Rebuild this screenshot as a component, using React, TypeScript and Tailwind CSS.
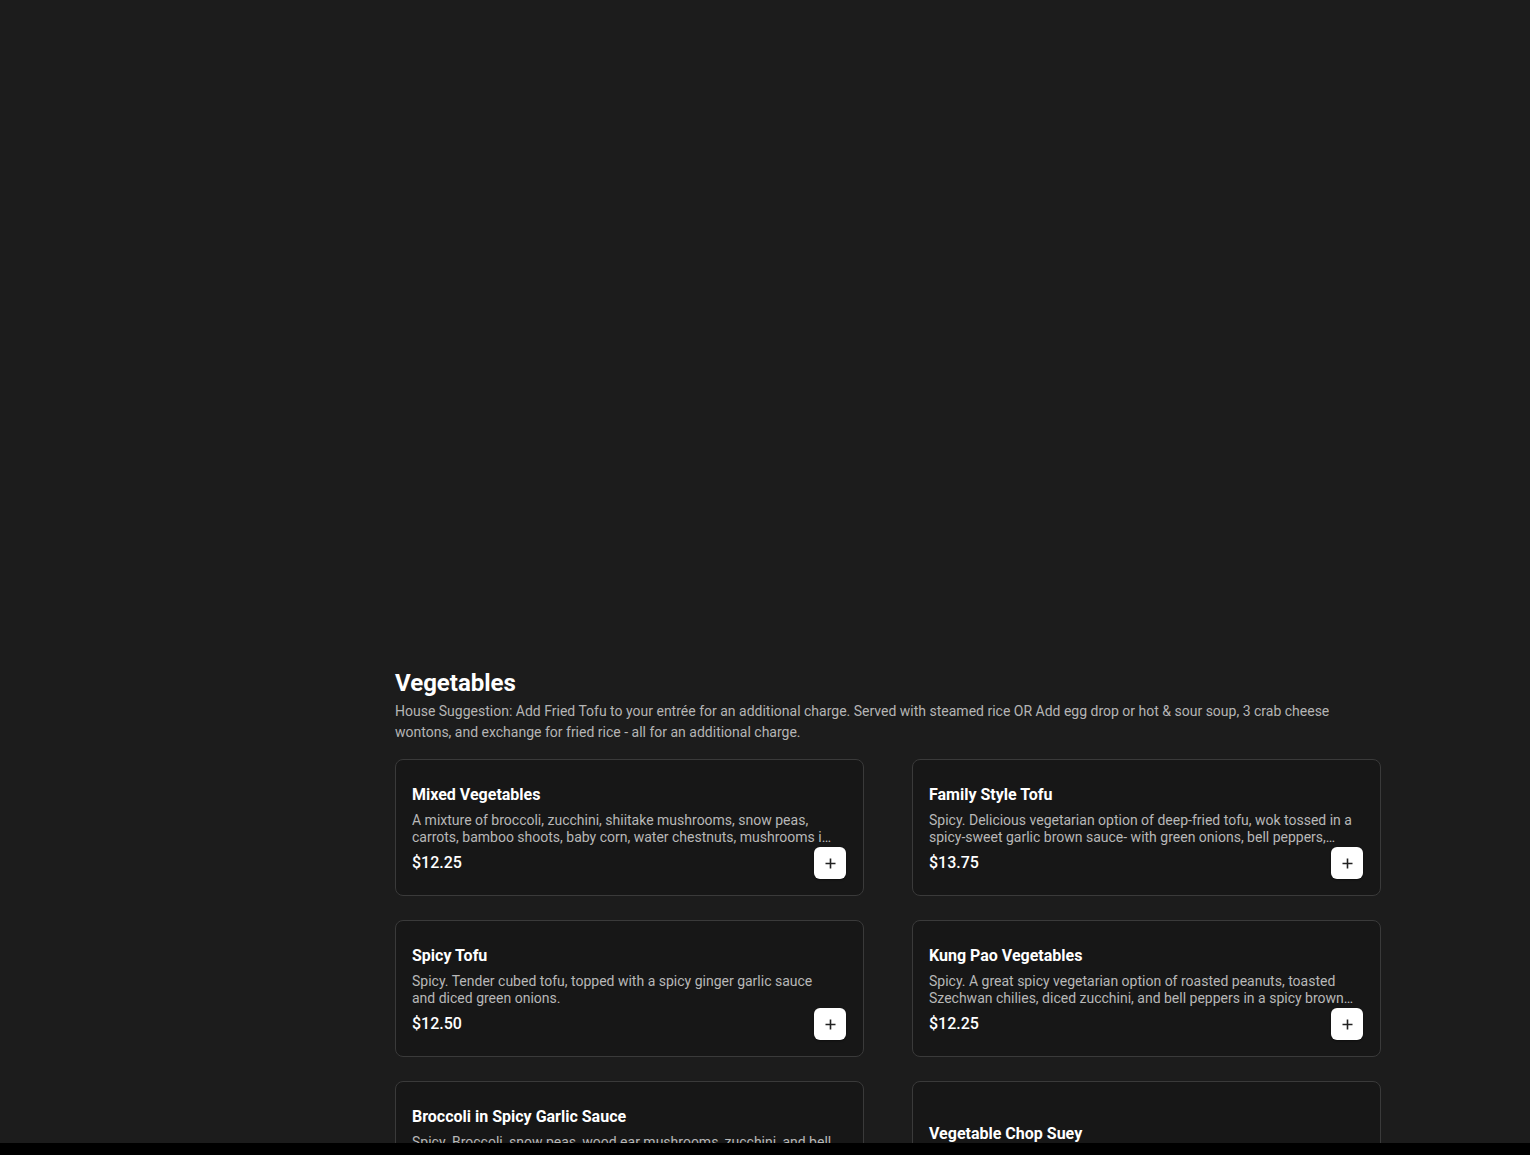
const items = [
  {
    name: "Mixed Vegetables",
    desc: "A mixture of broccoli, zucchini, shiitake mushrooms, snow peas, carrots, bamboo shoots, baby corn, water chestnuts, mushrooms in a light white garlic sauce.",
    price: "$12.25",
  },
  {
    name: "Family Style Tofu",
    desc: "Spicy. Delicious vegetarian option of deep-fried tofu, wok tossed in a spicy-sweet garlic brown sauce- with green onions, bell peppers, carrots and bamboo shoots.",
    price: "$13.75",
  },
  {
    name: "Spicy Tofu",
    desc: "Spicy. Tender cubed tofu, topped with a spicy ginger garlic sauce and diced green onions.",
    price: "$12.50",
  },
  {
    name: "Kung Pao Vegetables",
    desc: "Spicy. A great spicy vegetarian option of roasted peanuts, toasted Szechwan chilies, diced zucchini, and bell peppers in a spicy brown sauce.",
    price: "$12.25",
  },
  {
    name: "Broccoli in Spicy Garlic Sauce",
    desc: "Spicy. Broccoli, snow peas, wood ear mushrooms, zucchini, and bell peppers in a spicy garlic sauce.",
    price: "$12.25",
  },
  {
    name: "Vegetable Chop Suey",
    desc: "Assorted vegetables in a light white sauce.",
    price: "$12.25",
  },
]

function PlusIcon() {
  return (
    <svg width="11" height="11" viewBox="0 0 11 11" fill="none">
      <path d="M5.5 0.5v10M0.5 5.5h10" stroke="#222" strokeWidth="1.6" />
    </svg>
  )
}

export default function App() {
  return (
    <div
      className="min-h-screen bg-[#1c1c1c] text-white"
      style={{ fontFamily: "Roboto, 'Liberation Sans', sans-serif" }}
    >
      <div className="h-[667px]" />

      <section className="ml-[395px] w-[986px] pb-10">
        <h2 className="text-2xl font-bold leading-8">Vegetables</h2>
        <p className="mt-[2px] text-sm leading-[21px] text-[#b5b5b5]">
          House Suggestion: Add Fried Tofu to your entrée for an additional
          charge. Served with steamed rice OR Add egg drop or hot &amp; sour
          soup, 3 crab cheese wontons, and exchange for fried rice - all for an
          additional charge.
        </p>

        <div className="mt-4 grid grid-cols-2 gap-x-12 gap-y-[24px]">
          {items.map((it) => (
            <div
              key={it.name}
              className="flex h-[137px] flex-col justify-end rounded-lg border border-[#3a3a3a] bg-[#171717] pb-4 pl-4 pr-[17px]"
            >
              <p className="text-base font-bold leading-6">{it.name}</p>
              <p className="mt-[5px] line-clamp-2 pr-[9px] text-sm leading-[17px] text-[#b8b8b8]">
                {it.desc}
              </p>
              <div className="mt-px flex h-8 items-center justify-between">
                <span className="text-base font-medium">{it.price}</span>
                <button
                  type="button"
                  className="flex size-8 items-center justify-center rounded-md bg-white shadow-[0_1px_2px_rgba(0,0,0,0.4)]"
                >
                  <PlusIcon />
                </button>
              </div>
            </div>
          ))}
        </div>
      </section>

      <div className="fixed inset-x-0 bottom-0 h-3 bg-black" />
    </div>
  )
}
